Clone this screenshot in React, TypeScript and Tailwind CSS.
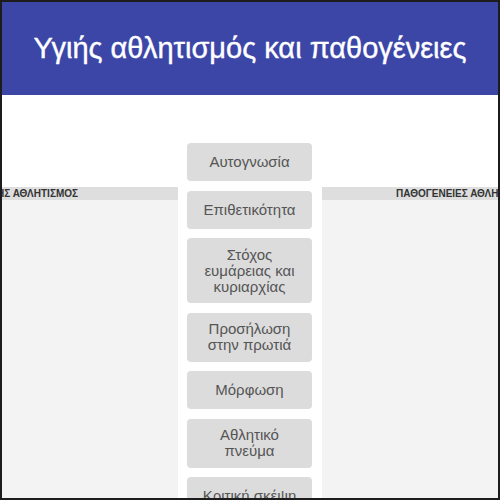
import React from 'react';

const items = [
    'Αυτογνωσία',
    'Επιθετικότητα',
    'Στόχος ευμάρειας και κυριαρχίας',
    'Προσήλωση στην πρωτιά',
    'Μόρφωση',
    'Αθλητικό πνεύμα',
    'Κριτική σκέψη',
];

const App = () => {
    return (
        <div className="w-[500px] h-[500px] border-2 border-[#1c1c1c] overflow-hidden bg-white flex flex-col font-['Liberation_Sans',Arial,sans-serif]">
            <header className="h-[93px] shrink-0 bg-[#3c46a7] flex items-center justify-center">
                <h1 className="text-white text-[29px] leading-none [-webkit-text-stroke:0.4px_white]">Υγιής αθλητισμός και παθογένειες</h1>
            </header>
            <div className="flex flex-1 min-h-0">
                {/* left panel */}
                <div className="w-[176px] shrink-0 pt-[92px] flex flex-col">
                    <div className="h-[13px] bg-[#dedede] flex justify-end items-center pr-[100px] overflow-hidden whitespace-nowrap text-[10px] font-bold text-[#333] leading-none">
                        ΥΓΙΗΣ ΑΘΛΗΤΙΣΜΟΣ
                    </div>
                    <div className="flex-1 bg-[#f3f3f3]" />
                </div>

                {/* middle column */}
                <div className="w-[144px] shrink-0 pt-[48px] pl-[9px] pr-[10px] flex flex-col gap-[9.5px]">
                    {items.map((item) => (
                        <button
                            key={item}
                            className="min-h-[38px] shrink-0 rounded bg-[#dcdcdc] px-2 py-[8.5px] text-[15px] leading-[16px] text-[#555] text-center flex items-center justify-center"
                        >
                            {item}
                        </button>
                    ))}
                </div>

                {/* right panel */}
                <div className="flex-1 pt-[92px] flex flex-col min-w-0">
                    <div className="h-[13px] bg-[#dedede] flex items-center pl-[74px] overflow-hidden whitespace-nowrap text-[10px] font-bold text-[#333] leading-none">
                        ΠΑΘΟΓΕΝΕΙΕΣ ΑΘΛΗΤΙΣΜΟΥ
                    </div>
                    <div className="flex-1 bg-[#f3f3f3]" />
                </div>
            </div>
        </div>
    );
};

export default App;
